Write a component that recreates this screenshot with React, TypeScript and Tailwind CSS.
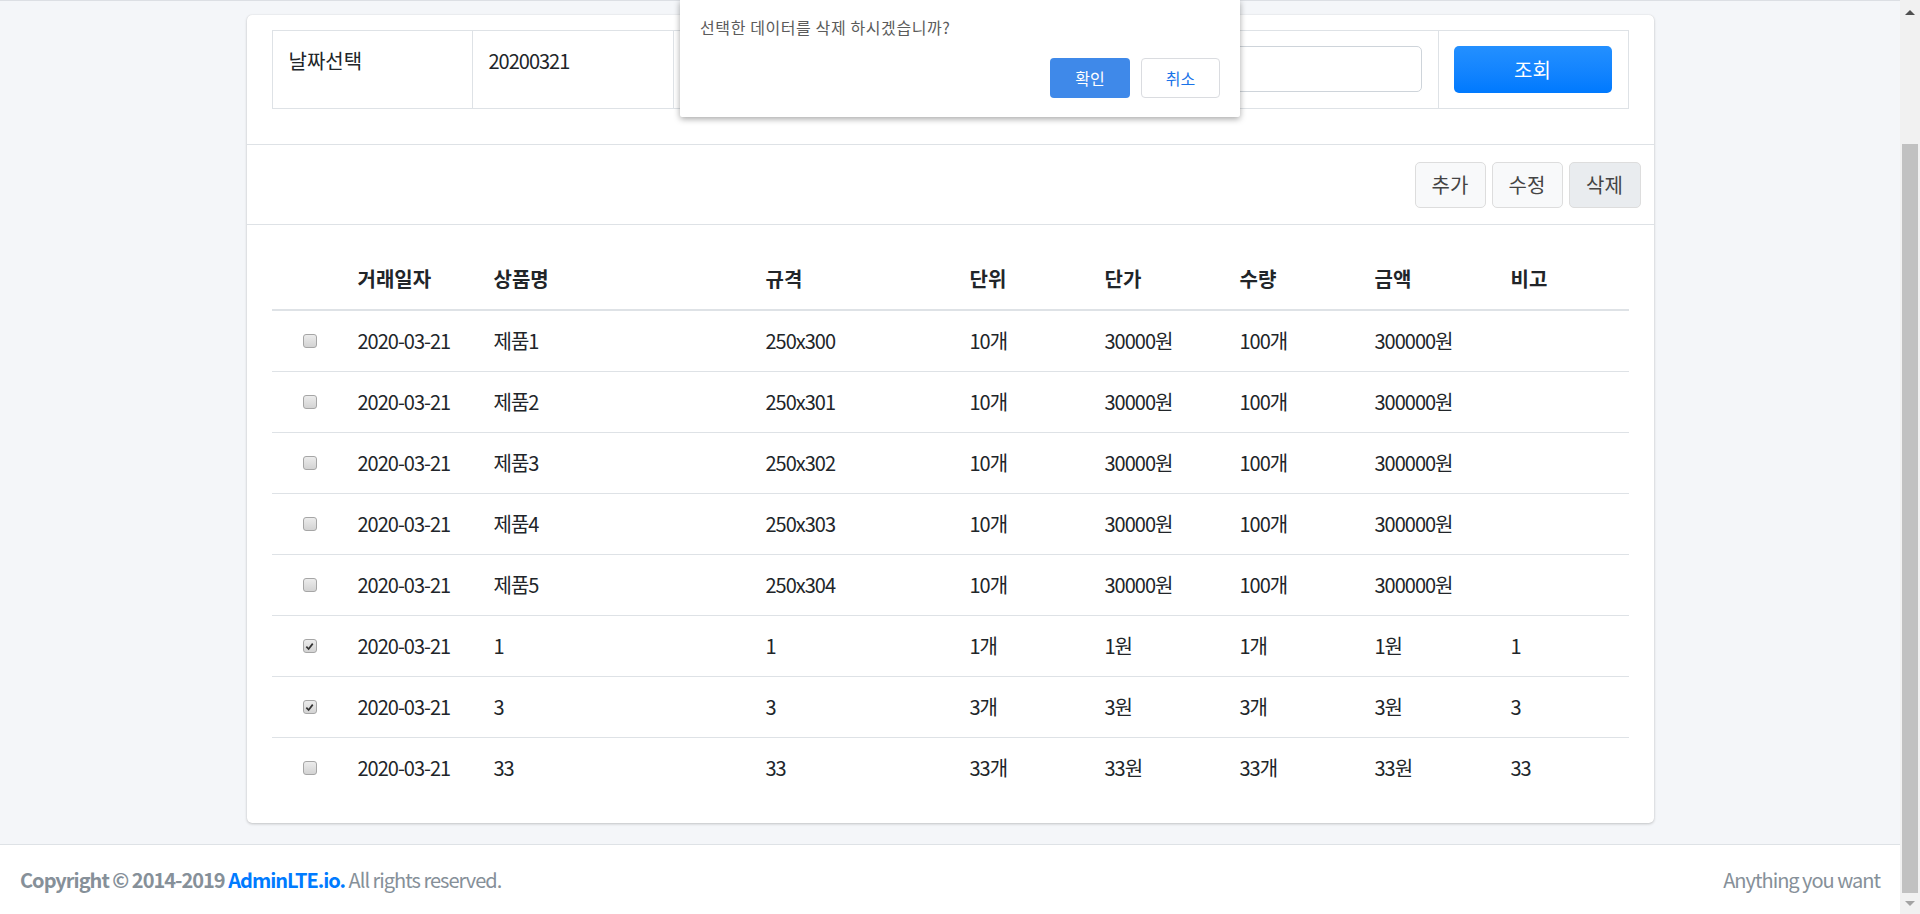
import React from 'react';

type Row = {
  checked: boolean;
  date: string;
  name: string;
  spec: string;
  unit: string;
  price: string;
  qty: string;
  amount: string;
  note: string;
};

const rows: Row[] = [
  { checked: false, date: '2020-03-21', name: '제품1', spec: '250x300', unit: '10개', price: '30000원', qty: '100개', amount: '300000원', note: '' },
  { checked: false, date: '2020-03-21', name: '제품2', spec: '250x301', unit: '10개', price: '30000원', qty: '100개', amount: '300000원', note: '' },
  { checked: false, date: '2020-03-21', name: '제품3', spec: '250x302', unit: '10개', price: '30000원', qty: '100개', amount: '300000원', note: '' },
  { checked: false, date: '2020-03-21', name: '제품4', spec: '250x303', unit: '10개', price: '30000원', qty: '100개', amount: '300000원', note: '' },
  { checked: false, date: '2020-03-21', name: '제품5', spec: '250x304', unit: '10개', price: '30000원', qty: '100개', amount: '300000원', note: '' },
  { checked: true, date: '2020-03-21', name: '1', spec: '1', unit: '1개', price: '1원', qty: '1개', amount: '1원', note: '1' },
  { checked: true, date: '2020-03-21', name: '3', spec: '3', unit: '3개', price: '3원', qty: '3개', amount: '3원', note: '3' },
  { checked: false, date: '2020-03-21', name: '33', spec: '33', unit: '33개', price: '33원', qty: '33개', amount: '33원', note: '33' },
];

const cols = 'grid grid-cols-[71px_136px_272px_204px_135px_135px_135px_136px_1fr]';

// Old-style native checkbox look
function Check({ checked }: { checked: boolean }) {
  return (
    <span className="flex h-[14px] w-[14px] items-center justify-center rounded-[3px] border border-[#a6a6a6] bg-linear-to-b from-[#ececec] to-[#d3d3d3]">
      {checked && (
        <svg viewBox="0 0 10 10" className="h-[9px] w-[9px]">
          <path d="M1.5 5.2 L4 7.8 L8.6 1.8" fill="none" stroke="#333" strokeWidth="1.9" />
        </svg>
      )}
    </span>
  );
}

export default function App() {
  return (
    <div
      className="relative flex h-[914px] w-full overflow-hidden bg-[#f4f6f9] text-[#212529]"
      style={{ fontFamily: '"Noto Sans CJK KR", "Noto Sans", sans-serif' }}
    >
      {/* Page */}
      <div className="flex min-w-0 flex-1 flex-col">
        <div className="h-px bg-[#dcdfe4]" />

        <div className="flex-1 pt-[14px]">
          <div className="mx-auto w-[1407px] rounded-[5px] bg-white shadow-[0_0_1px_rgba(0,0,0,0.125),0_1px_3px_rgba(0,0,0,0.2)]">
            {/* Search filter */}
            <div className="border-b border-[#dee2e6] px-[25px] pt-[15px] pb-[35px]">
              <div className="grid h-[79px] grid-cols-[199px_201px_200px_1fr_190px] border border-[#dee2e6]">
                <div className="px-[16px] pt-[15px] text-[20px] leading-[30px]">날짜선택</div>
                <div className="border-l border-[#dee2e6] px-[16px] pt-[15px] text-[20px] leading-[30px] tracking-[-1px]">20200321</div>
                <div className="border-l border-[#dee2e6] px-[16px] pt-[15px] text-[20px] leading-[30px]">상품명</div>
                <div className="border-l border-[#dee2e6] pt-[15px] pr-[16px] pl-[16px]">
                  <div className="h-[46px] w-full rounded-[5px] border border-[#ced4da] bg-white" />
                </div>
                <div className="border-l border-[#dee2e6] pt-[15px] pl-[15px]">
                  <button className="h-[47px] w-[158px] rounded-[5px] bg-linear-to-b from-[#2390ff] to-[#0079fe] text-[20px] text-white">
                    조회
                  </button>
                </div>
              </div>
            </div>

            {/* Actions */}
            <div className="flex justify-end gap-[6px] border-b border-[#dee2e6] pt-[17px] pr-[13px] pb-[16px]">
              <button className="h-[46px] w-[71px] rounded-[5px] border border-[#dddddd] bg-[#f8f9fa] text-[20px] text-[#444]">추가</button>
              <button className="h-[46px] w-[71px] rounded-[5px] border border-[#dddddd] bg-[#f8f9fa] text-[20px] text-[#444]">수정</button>
              <button className="h-[46px] w-[72px] rounded-[5px] border border-[#dddddd] bg-[#e9ecef] text-[20px] text-[#444]">삭제</button>
            </div>

            {/* List */}
            <div className="px-[25px] pt-[23px] pb-[25px] text-[20px] leading-[30px]">
              <div className={`${cols} h-[63px] items-center border-b-2 border-[#dee2e6] font-bold`}>
                <div />
                <div className="pl-[15px]">거래일자</div>
                <div className="pl-[15px]">상품명</div>
                <div className="pl-[15px]">규격</div>
                <div className="pl-[15px]">단위</div>
                <div className="pl-[15px]">단가</div>
                <div className="pl-[15px]">수량</div>
                <div className="pl-[15px]">금액</div>
                <div className="pl-[15px]">비고</div>
              </div>
              {rows.map((r, i) => (
                <div
                  key={i}
                  className={`${cols} items-center tracking-[-1px] ${i < rows.length - 1 ? 'h-[61px] border-b border-[#dee2e6]' : 'h-[60px]'}`}
                >
                  <div className="pl-[31px]">
                    <Check checked={r.checked} />
                  </div>
                  <div className="pl-[15px]">{r.date}</div>
                  <div className="pl-[15px]">{r.name}</div>
                  <div className="pl-[15px]">{r.spec}</div>
                  <div className="pl-[15px]">{r.unit}</div>
                  <div className="pl-[15px]">{r.price}</div>
                  <div className="pl-[15px]">{r.qty}</div>
                  <div className="pl-[15px]">{r.amount}</div>
                  <div className="pl-[15px]">{r.note}</div>
                </div>
              ))}
            </div>
          </div>
        </div>

        {/* Footer */}
        <footer className="flex h-[70px] items-center justify-between border-t border-[#dee2e6] bg-white px-[20px] text-[20px] tracking-[-1px] text-[#869099]">
          <div>
            <strong>
              Copyright © 2014-2019 <span className="text-[#007bff]">AdminLTE.io.</span>
            </strong>{' '}
            All rights reserved.
          </div>
          <div>Anything you want</div>
        </footer>
      </div>

      {/* Scrollbar */}
      <div className="flex w-[20px] flex-col bg-[#f1f1f1]">
        <div className="flex h-[25px] items-center justify-center">
          <span className="h-0 w-0 border-x-[5px] border-b-[5px] border-x-transparent border-b-[#505050]" />
        </div>
        <div className="h-[119px]" />
        <div className="mx-[2px] flex-1 bg-[#c1c1c1]" />
        <div className="flex h-[21px] items-center justify-center">
          <span className="h-0 w-0 border-x-[5px] border-t-[5px] border-x-transparent border-t-[#a3a3a3]" />
        </div>
      </div>

      {/* Confirm dialog */}
      <div className="absolute top-0 left-[680px] flex h-[117px] w-[560px] flex-col justify-between rounded-b-[2px] bg-white px-[20px] pt-[13px] pb-[19px] shadow-[0_2px_6px_rgba(0,0,0,0.35)]">
        <p className="text-[16px] leading-[28px] tracking-[0.6px] text-[#5b5b5b]">선택한 데이터를 삭제 하시겠습니까?</p>
        <div className="flex justify-end gap-[11px]">
          <button className="h-[40px] w-[80px] rounded-[4px] bg-[#3f89e9] text-[16px] text-white">확인</button>
          <button className="h-[40px] w-[79px] rounded-[4px] border border-[#dadce0] bg-white text-[16px] text-[#1a73e8]">취소</button>
        </div>
      </div>
    </div>
  );
}
